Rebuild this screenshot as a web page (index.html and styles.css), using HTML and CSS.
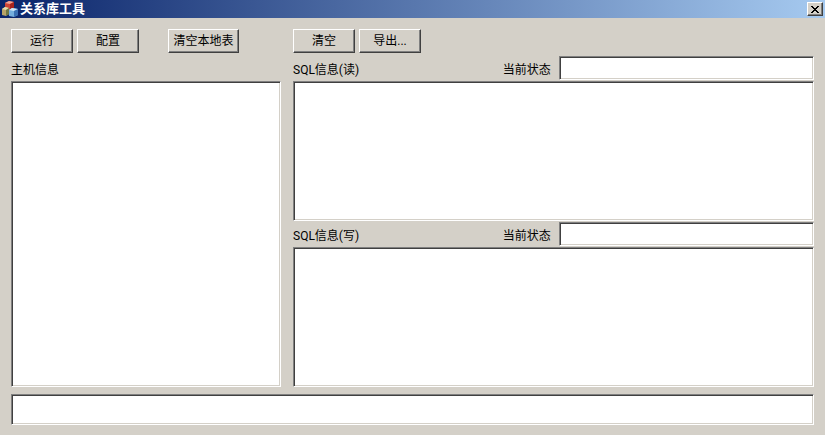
FILE: index.html
```
<!DOCTYPE html>
<html lang="zh-CN">
<head>
	<meta charset="utf-8">
	<title>关系库工具</title>
	<link rel="stylesheet" href="styles.css">
</head>
<body>
<div class="window">
	<div class="titlebar">
		<svg class="logo" width="16" height="16" viewBox="0 0 16 16">
			<path d="M3 2l4-2 5 1v6l-4 2-5-1z" fill="#cc4436"/>
			<path d="M3 2l4-2 5 1-4 2z" fill="#f0a496"/>
			<path d="M8 3l4-2v6l-4 2z" fill="#a8241e"/>
			<path d="M0 8l3-2 4 1v6l-3 2-4-1z" fill="#b8a468"/>
			<path d="M0 8l3-2 4 1-3 2z" fill="#e8dcae"/>
			<path d="M4 9l3-2v6l-3 2z" fill="#6e7844"/>
			<path d="M7 9l3-2 6 1v6l-4 2-5-1z" fill="#74aede"/>
			<path d="M7 9l3-2 6 1-4 2z" fill="#d0e8f8"/>
			<path d="M12 10l4-2v6l-4 2z" fill="#3a70b4"/>
		</svg>
		<h1 class="title">关系库工具</h1>
		<button type="button" class="close" aria-label="关闭">
			<svg width="8" height="7" viewBox="0 0 8 7" shape-rendering="crispEdges">
				<path d="M0 0h2v1h1v1h2V1h1V0h2v1H7v1H6v1H5v1h1v1h1v1h1v1H6V6H5V5H3v1H2v1H0V6h1V5h1V4h1V3H2V2H1V1H0z" fill="#000"/>
			</svg>
		</button>
	</div>

	<div class="client">
		<div class="columns">
			<div class="col">
				<div class="toolbar">
					<button type="button" class="btn">运行</button>
					<button type="button" class="btn">配置</button>
					<button type="button" class="btn btn-wide">清空本地表</button>
				</div>
				<div class="row">
					<label for="host">主机信息</label>
				</div>
				<textarea id="host" class="field area"></textarea>
			</div>

			<div class="col">
				<div class="toolbar">
					<button type="button" class="btn">清空</button>
					<button type="button" class="btn">导出...</button>
				</div>
				<div class="row">
					<label for="sqlRead">SQL信息(读)</label>
					<label class="state" for="readState">当前状态</label>
					<input type="text" id="readState" class="field state-box">
				</div>
				<textarea id="sqlRead" class="field area"></textarea>
				<div class="row">
					<label for="sqlWrite">SQL信息(写)</label>
					<label class="state" for="writeState">当前状态</label>
					<input type="text" id="writeState" class="field state-box">
				</div>
				<textarea id="sqlWrite" class="field area"></textarea>
			</div>
		</div>
		<input type="text" class="field message" aria-label="消息">
	</div>
</div>
</body>
</html>
```
FILE: styles.css
```
* {box-sizing:border-box;}
body {margin:0;background:#d4d0c8;color:#000;font:12px/16px Roboto,"Noto Sans CJK SC",sans-serif;}
button,input,textarea {font:inherit;color:inherit;border-radius:0;margin:0;}
.window {display:flex;flex-direction:column;min-height:100vh;}

/* title bar */
.titlebar {display:flex;align-items:center;height:18px;padding:0 2px;background:linear-gradient(to right,#0a246a,#a6caf0);}
.logo {flex:none;}
.title {flex:1;margin:0 0 0 2px;color:#fff;font-size:13px;line-height:18px;font-weight:bold;}
.close {display:flex;align-items:center;justify-content:center;width:16px;height:14px;padding:0;background:#d4d0c8;
	border:1px solid;border-color:#fff #404040 #404040 #fff;box-shadow:inset -1px -1px #808080;}

.client {flex:1;display:flex;flex-direction:column;padding:11px 11px 10px;}
.columns {flex:1;display:grid;grid-template-columns:270px 1fr;column-gap:12px;}
.col {display:flex;flex-direction:column;gap:1px;}

.toolbar {display:flex;gap:4px;margin-bottom:2px;}
.btn {width:62px;height:24px;padding:0;background:#d4d0c8;line-height:16px;white-space:nowrap;
	border:1px solid;border-color:#fff #404040 #404040 #fff;box-shadow:inset -1px -1px #808080;}
.btn-wide {width:71px;margin-left:25px;}

.row {display:flex;align-items:center;height:24px;}
.row label {padding-top:3px;}
.state {margin-left:auto;}
.state-box {width:49%;height:24px;margin-left:8px;}

/* sunken edit boxes */
.field {padding:2px 4px;background:#fff;outline:none;
	border:1px solid;border-color:#808080 #fff #fff #808080;box-shadow:inset 1px 1px #404040,inset -1px -1px #d4d0c8;}
.area {flex:1;display:block;width:100%;min-height:60px;resize:none;}
.message {width:100%;height:31px;margin-top:7px;}
```
